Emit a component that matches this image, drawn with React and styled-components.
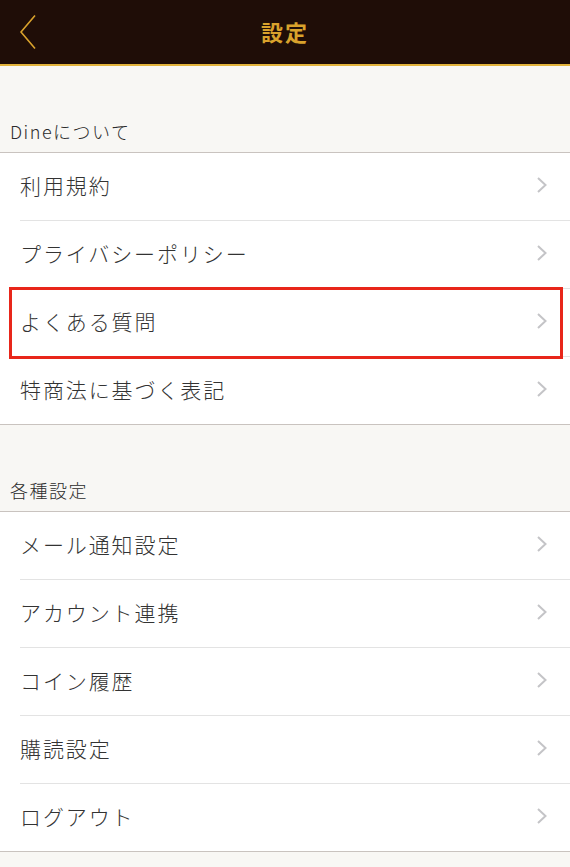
import React from "react";
import styled, { createGlobalStyle } from "styled-components";

const GlobalStyle = createGlobalStyle`
  html, body {
    margin: 0;
    padding: 0;
    background: #f8f7f4;
  }
  body {
    font-family: "Noto Sans CJK JP", "Liberation Sans", sans-serif;
  }
  * { box-sizing: border-box; }
`;

const sections = [
  {
    title: "Dineについて",
    items: ["利用規約", "プライバシーポリシー", "よくある質問", "特商法に基づく表記"],
  },
  {
    title: "各種設定",
    items: ["メール通知設定", "アカウント連携", "コイン履歴", "購読設定", "ログアウト"],
  },
];

const Page = () => {
  return (
    <>
      <GlobalStyle />
      <Screen>
        <Header>
          <BackButton>
            <svg width="20" height="36" viewBox="0 0 20 36">
              <path d="M17 1.5 L3 18 L17 34.5" fill="none" stroke="#d9a22c" strokeWidth="1.6" />
            </svg>
          </BackButton>
          <Title>設定</Title>
        </Header>

        {sections.map((s) => (
          <Section key={s.title}>
            <SectionTitle>{s.title}</SectionTitle>
            <List>
              {s.items.map((item) => (
                <Row key={item} highlighted={item === "よくある質問"}>
                  <RowInner>
                    <Label>{item}</Label>
                    <svg width="12" height="18" viewBox="0 0 12 18">
                      <path d="M2 2 L9.5 9 L2 16" fill="none" stroke="#c4c4c7" strokeWidth="2" />
                    </svg>
                  </RowInner>
                </Row>
              ))}
            </List>
          </Section>
        ))}
      </Screen>
    </>
  );
};

export default Page;

const Screen = styled.div`
  width: 100%;
  min-height: 867px;
  background: #f8f7f4;
`;

const Header = styled.div`
  position: relative;
  height: 66px;
  background: #1f0d07;
  border-bottom: 2px solid #e2b33c;
  display: flex;
  justify-content: center;
  align-items: center;
`;

const BackButton = styled.div`
  position: absolute;
  left: 18px;
  top: 14px;
  width: 20px;
  height: 36px;
`;

const Title = styled.h1`
  margin: 0 0 2px;
  color: #d9a22c;
  font-size: 22px;
  font-weight: 700;
  letter-spacing: 2px;
`;

const Section = styled.div`
  display: flex;
  flex-direction: column;
`;

const SectionTitle = styled.div`
  padding: 55px 10px 11px;
  font-size: 18px;
  line-height: 20px;
  font-weight: 300;
  color: #2b2b2b;
  letter-spacing: 1.5px;
`;

const List = styled.div`
  background: #ffffff;
  border-top: 1px solid #c9c3bf;
  border-bottom: 1px solid #c9c3bf;
`;

const Row = styled.div`
  position: relative;
  padding-left: 20px;

  &:last-child > div {
    border-bottom: none;
    height: 67px;
  }

  ${(p) =>
    p.highlighted &&
    `
    &::after {
      content: "";
      position: absolute;
      top: -2px;
      bottom: -2px;
      left: 9px;
      right: 7px;
      border: 3px solid #e8261a;
      pointer-events: none;
    }
  `}
`;

const RowInner = styled.div`
  height: 68px;
  display: flex;
  align-items: center;
  justify-content: space-between;
  padding-right: 22px;
  padding-bottom: 3px;
  border-bottom: 1px solid #e3e3e3;
`;

const Label = styled.span`
  font-size: 21px;
  font-weight: 300;
  color: #333333;
  letter-spacing: 1.9px;
`;
